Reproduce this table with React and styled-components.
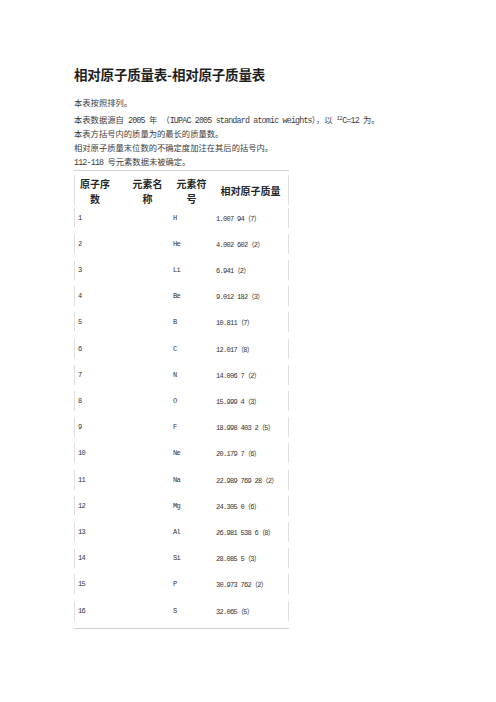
import React from "react";
import styled, { createGlobalStyle } from "styled-components";

const Global = createGlobalStyle`
  html, body { margin: 0; padding: 0; background: #fff; }
  body { font-family: "Noto Sans CJK SC", sans-serif; }
`;

const Page = styled.div`
  width: 496px;
  min-height: 702px;
  box-sizing: border-box;
  padding: 64px 0 0 74px;
`;

const Title = styled.h1`
  margin: 0 0 11px 0;
  font-size: 13.5px;
  line-height: 20px;
  font-weight: 700;
  color: #1e1e1e;
  letter-spacing: -0.2px;
`;

const Para = styled.p`
  margin: 0 0 ${(p) => (p.$gap ? 2.5 : 0)}px 0;
  font-size: 8.3px;
  line-height: 14px;
  height: 14px;
  color: #3c3c3c;
  white-space: nowrap;
`;

const Mono = styled.span`
  font-family: "Liberation Mono", monospace;
  letter-spacing: -0.8px;
  line-height: 1;
  sup {
    font-size: 5px;
    line-height: 1;
    vertical-align: 3px;
    letter-spacing: -0.3px;
  }
`;

const Table = styled.div`
  margin-top: 2px;
  width: 215px;
  border-top: 1px solid #d2d2d2;
  border-bottom: 1px solid #cfcfcf;
  padding: 4px 0 7px 0;
  display: flex;
  flex-direction: column;
  gap: 6.2px;
`;

const Row = styled.div`
  display: grid;
  grid-template-columns: 40px 55px 43px 1fr;
  align-items: center;
  height: ${(p) => (p.$head ? 30 : 20)}px;
  border-left: 1px solid #dedede;
  border-right: 1px solid #dedede;
  margin-bottom: ${(p) => (p.$head ? -3 : 0)}px;
`;

const Head = styled.div`
  text-align: center;
  font-size: 10px;
  line-height: 15px;
  font-weight: 700;
  color: #262626;
  padding-top: 1px;
  padding-left: ${(p) => p.$shift || 0}px;
`;

const Cell = styled.div`
  padding-left: 3px;
  font-family: "Liberation Mono", "Noto Sans CJK SC", monospace;
  font-size: 7px;
  letter-spacing: -0.7px;
  color: #333;
  white-space: nowrap;
`;

const data = [
  ["1", "H", "1.007 94（7）"],
  ["2", "He", "4.002 602（2）"],
  ["3", "Li", "6.941（2）"],
  ["4", "Be", "9.012 182（3）"],
  ["5", "B", "10.811（7）"],
  ["6", "C", "12.017（8）"],
  ["7", "N", "14.006 7（2）"],
  ["8", "O", "15.999 4（3）"],
  ["9", "F", "18.998 403 2（5）"],
  ["10", "Ne", "20.179 7（6）"],
  ["11", "Na", "22.989 769 28（2）"],
  ["12", "Mg", "24.305 0（6）"],
  ["13", "Al", "26.981 538 6（8）"],
  ["14", "Si", "28.085 5（3）"],
  ["15", "P", "30.973 762（2）"],
  ["16", "S", "32.065（5）"],
];

export default function App() {
  return (
    <Page>
      <Global />
      <Title>相对原子质量表-相对原子质量表</Title>
      <Para $gap>本表按照排列。</Para>
      <Para>
        本表数据源自<Mono> 2005 </Mono>年<Mono> </Mono>（<Mono>IUPAC 2005 standard atomic weights</Mono>），以
        <Mono> <sup>12</sup>C=12 </Mono>为。
      </Para>
      <Para>本表方括号内的质量为的最长的质量数。</Para>
      <Para>相对原子质量末位数的不确定度加注在其后的括号内。</Para>
      <Para>
        <Mono>112-118 </Mono>号元素数据未被确定。
      </Para>
      <Table>
        <Row $head>
          <Head>原子序<br />数</Head>
          <Head $shift={10}>元素名<br />称</Head>
          <Head>元素符<br />号</Head>
          <Head>相对原子质量</Head>
        </Row>
        {data.map(([n, s, m]) => (
          <Row key={n}>
            <Cell>{n}</Cell>
            <Cell />
            <Cell>{s}</Cell>
            <Cell>{m}</Cell>
          </Row>
        ))}
      </Table>
    </Page>
  );
}
